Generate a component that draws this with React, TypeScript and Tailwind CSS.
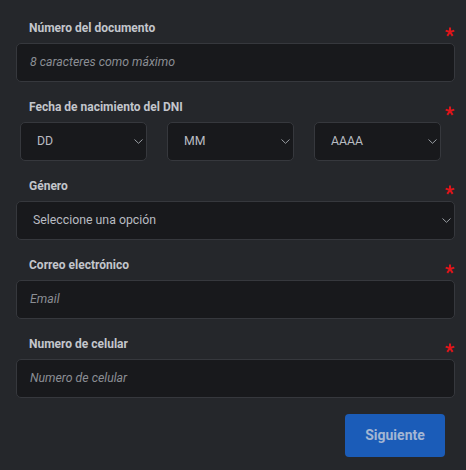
import React from "react";

const Star = () => (
  <svg width="10" height="10" viewBox="0 0 10 10" className="mt-[6px] shrink-0">
    <g stroke="#e0161b" strokeWidth="2" strokeLinecap="butt">
      <line x1="5" y1="5" x2="5" y2="0.5" />
      <line x1="5" y1="5" x2="9.3" y2="3.6" />
      <line x1="5" y1="5" x2="7.7" y2="8.9" />
      <line x1="5" y1="5" x2="2.3" y2="8.9" />
      <line x1="5" y1="5" x2="0.7" y2="3.6" />
    </g>
  </svg>
);

const Chevron = () => (
  <svg width="9" height="5" viewBox="0 0 9 5" className="shrink-0">
    <path d="M0.5 0.5 L4.5 4.3 L8.5 0.5" fill="none" stroke="#9a9ea4" strokeWidth="1" />
  </svg>
);

const Label = ({ text, first }: { text: string; first?: boolean }) => (
  <div className={`flex justify-between items-start h-[22px] ${first ? "" : "mt-[18px]"}`}>
    <span className="pl-[13px] text-[12px] leading-[14px] font-bold text-[#c3c6cc]">{text}</span>
    <Star />
  </div>
);

const Input = ({ placeholder }: { placeholder: string }) => (
  <div className="h-[39px] rounded-[5px] border border-[#36383d] bg-[#18191c] flex items-center pl-[13px]">
    <span className="italic text-[12.3px] text-[#8b8e94]">{placeholder}</span>
  </div>
);

const Select = ({ text, className }: { text: string; className?: string }) => (
  <div
    className={`h-[39px] rounded-[5px] border border-[#36383d] bg-[#18191c] flex items-center justify-between pl-[16px] pr-[3px] ${className ?? ""}`}
  >
    <span className="text-[12.3px] text-[#b8bcc2]">{text}</span>
    <Chevron />
  </div>
);

export default function App() {
  return (
    <div
      className="w-[466px] h-[470px] bg-[#25272b] px-[11px] pt-[21px]"
      style={{ fontFamily: "Roboto, 'Liberation Sans', sans-serif" }}
    >
      <div className="w-[439px] ml-[5px]">
        <Label text="Número del documento" first />
        <Input placeholder="8 caracteres como máximo" />

        <Label text="Fecha de nacimiento del DNI" />
        <div className="flex gap-[20px] pl-[4px]">
          <Select text="DD" className="w-[127px]" />
          <Select text="MM" className="w-[127px]" />
          <Select text="AAAA" className="w-[127px]" />
        </div>

        <Label text="Género" />
        <Select text="Seleccione una opción" />

        <Label text="Correo electrónico" />
        <Input placeholder="Email" />

        <Label text="Numero de celular" />
        <Input placeholder="Numero de celular" />

        <div className="flex justify-end mt-[16px] pr-[10px]">
          <button className="w-[100px] h-[43px] rounded-[4px] bg-[#1b5cb8] text-[14px] font-bold text-[#a3b6d3]">
            Siguiente
          </button>
        </div>
      </div>
    </div>
  );
}
